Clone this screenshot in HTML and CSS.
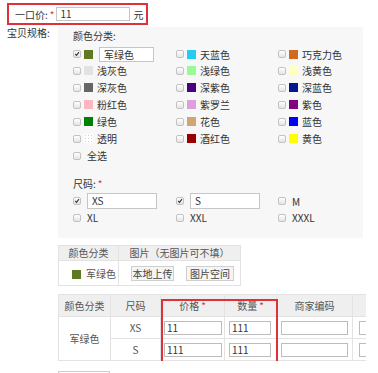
FILE: index.html
```html
<!DOCTYPE html>
<html>
<head>
<meta charset="utf-8">
<link rel="stylesheet" href="styles.css">
</head>
<body>
<div class="page">
  <div class="price">
    <span class="price-label">一口价:</span><span class="req">*</span>
    <span class="price-input">11</span>
    <span class="unit">元</span>
  </div>

  <div class="spec">
    <div class="spec-label">宝贝规格:</div>
    <div class="panel">
      <div class="sec-title">颜色分类:</div>
      <div class="colors">
        <div class="item"><span class="cb on"><svg viewBox="0 0 8 8"><path d="M1.6 3.9 L3.3 5.7 L6.6 1.6"/></svg></span><span class="sw" style="background:#5f7a22"></span><span class="name-input">军绿色</span></div>
        <div class="item"><span class="cb"></span><span class="sw" style="background:#22ccf2"></span><span class="lbl">天蓝色</span></div>
        <div class="item"><span class="cb"></span><span class="sw" style="background:#d2691e"></span><span class="lbl">巧克力色</span></div>

        <div class="item"><span class="cb"></span><span class="sw" style="background:#e2e2e2"></span><span class="lbl">浅灰色</span></div>
        <div class="item"><span class="cb"></span><span class="sw" style="background:#98fb98"></span><span class="lbl">浅绿色</span></div>
        <div class="item"><span class="cb"></span><span class="sw" style="background:#ffffc0"></span><span class="lbl">浅黄色</span></div>

        <div class="item"><span class="cb"></span><span class="sw" style="background:#666666"></span><span class="lbl">深灰色</span></div>
        <div class="item"><span class="cb"></span><span class="sw" style="background:#4b0082"></span><span class="lbl">深紫色</span></div>
        <div class="item"><span class="cb"></span><span class="sw" style="background:#021890"></span><span class="lbl">深蓝色</span></div>

        <div class="item"><span class="cb"></span><span class="sw" style="background:#ffb6c1"></span><span class="lbl">粉红色</span></div>
        <div class="item"><span class="cb"></span><span class="sw" style="background:#dda0dd"></span><span class="lbl">紫罗兰</span></div>
        <div class="item"><span class="cb"></span><span class="sw" style="background:#800080"></span><span class="lbl">紫色</span></div>

        <div class="item"><span class="cb"></span><span class="sw" style="background:#008000"></span><span class="lbl">绿色</span></div>
        <div class="item"><span class="cb"></span><span class="sw" style="background:#d2a574"></span><span class="lbl">花色</span></div>
        <div class="item"><span class="cb"></span><span class="sw" style="background:#0000ff"></span><span class="lbl">蓝色</span></div>

        <div class="item"><span class="cb"></span><span class="sw clear"></span><span class="lbl">透明</span></div>
        <div class="item"><span class="cb"></span><span class="sw" style="background:#990000"></span><span class="lbl">酒红色</span></div>
        <div class="item"><span class="cb"></span><span class="sw" style="background:#ffff00"></span><span class="lbl">黄色</span></div>

        <div class="item"><span class="cb wide"></span><span class="lbl">全选</span></div>
      </div>

      <div class="sec-title size-title">尺码:<span class="req">*</span></div>
      <div class="sizes">
        <div class="item"><span class="cb on wide"><svg viewBox="0 0 8 8"><path d="M1.6 3.9 L3.3 5.7 L6.6 1.6"/></svg></span><span class="size-input">XS</span></div>
        <div class="item"><span class="cb on wide"><svg viewBox="0 0 8 8"><path d="M1.6 3.9 L3.3 5.7 L6.6 1.6"/></svg></span><span class="size-input">S</span></div>
        <div class="item"><span class="cb wide"></span><span class="lbl">M</span></div>
        <div class="item"><span class="cb wide"></span><span class="lbl">XL</span></div>
        <div class="item"><span class="cb wide"></span><span class="lbl">XXL</span></div>
        <div class="item"><span class="cb wide"></span><span class="lbl">XXXL</span></div>
      </div>
    </div>
  </div>

  <table class="pic-table">
    <tr class="head"><td class="c1">颜色分类</td><td>图片（无图片可不填）</td></tr>
    <tr class="body-row">
      <td class="c1 color-cell"><span class="sw" style="background:#5f7a22"></span><span>军绿色</span></td>
      <td class="btn-cell"><span class="btn b1">本地上传</span><span class="btn b2">图片空间</span></td>
    </tr>
  </table>

  <div class="sku-wrap">
    <table class="sku-table">
      <colgroup><col style="width:52px"><col style="width:50px"><col style="width:64px"><col style="width:52px"><col style="width:76px"><col style="width:60px"></colgroup>
      <tr class="head"><td>颜色分类</td><td>尺码</td><td>价格<span class="req">*</span></td><td>数量<span class="req">*</span></td><td>商家编码</td><td></td></tr>
      <tr>
        <td rowspan="2">军绿色</td><td>XS</td>
        <td class="lc"><span class="ti w-price">11</span></td>
        <td class="lc"><span class="ti w-qty">111</span></td>
        <td class="lc"><span class="ti w-code"></span></td>
        <td class="lc"><span class="ti w-last"></span></td>
      </tr>
      <tr>
        <td>S</td>
        <td class="lc"><span class="ti w-price">111</span></td>
        <td class="lc"><span class="ti w-qty">111</span></td>
        <td class="lc"><span class="ti w-code"></span></td>
        <td class="lc"><span class="ti w-last"></span></td>
      </tr>
    </table>
    <div class="mark"></div>
  </div>

  <div class="stub"></div>
</div>
</body>
</html>
```
FILE: styles.css
```css
html, body {
  margin: 0;
  overflow: hidden;
}
body {
  font-family: "Noto Sans CJK SC", "Noto Sans", sans-serif;
  font-size: 10px;
  color: #333;
  background: #fff;
}
.page {
  padding: 3px 0 0 7px;
}
.req {
  color: #e0313b;
  margin-left: 2px;
}
.price {
  display: flex;
  align-items: center;
  width: 141px;
  height: 22px;
  box-sizing: border-box;
  border: 2px solid #e0313b;
}
.price-label {
  padding-left: 6px;
}
.price-input {
  margin-left: 2px;
  width: 74px;
  height: 14px;
  line-height: 12px;
  box-sizing: border-box;
  border: 1px solid #c6c6c6;
  padding-left: 3px;
  background: #fff;
}
.unit {
  margin-left: 3px;
}
.spec {
  display: flex;
  margin-top: 2px;
}
.spec-label {
  width: 51px;
  line-height: 12px;
}
.panel {
  width: 305px;
  height: 211px;
  box-sizing: border-box;
  background: #f7f7f7;
  padding: 2px 0 0 15px;
}
.sec-title {
  height: 14px;
  line-height: 14px;
  margin-bottom: 3px;
}
.colors {
  display: grid;
  grid-template-columns: 103px 102px 90px;
  grid-template-rows: 16px repeat(6, 17px);
}
.item {
  display: flex;
  align-items: center;
  white-space: nowrap;
}
.cb {
  flex: none;
  width: 8px;
  height: 8px;
  box-sizing: border-box;
  border: 1px solid #c2c2c2;
  border-radius: 2px;
  background: linear-gradient(#ffffff, #e4e4e4);
  margin-right: 3px;
  display: flex;
}
.cb.wide {
  margin-right: 6px;
}
.cb svg {
  width: 6px;
  height: 6px;
}
.cb svg path {
  fill: none;
  stroke: #333;
  stroke-width: 1.5;
}
.sw {
  flex: none;
  width: 9px;
  height: 9px;
  margin-right: 4px;
}
.sw.clear {
  background-color: #fff;
  background-image: radial-gradient(circle, #d0d0d0 0.8px, transparent 1px);
  background-size: 3px 3px;
}
.name-input {
  margin-left: 2px;
  width: 55px;
  height: 15px;
  line-height: 13px;
  box-sizing: border-box;
  border: 1px solid #c6c6c6;
  background: #fff;
  padding-left: 4px;
}
.size-title {
  margin-top: 13px;
  margin-bottom: 2px;
}
.sizes {
  display: grid;
  grid-template-columns: 103px 102px 90px;
  grid-template-rows: 16px 17px;
}
.size-input {
  width: 70px;
  height: 16px;
  line-height: 14px;
  box-sizing: border-box;
  border: 1px solid #c6c6c6;
  background: #fff;
  padding-left: 4px;
}
.pic-table {
  margin: 7px 0 0 51px;
  border-collapse: collapse;
  table-layout: fixed;
  width: 183px;
  color: #555;
}
.pic-table td {
  border: 1px solid #e3e3e3;
  padding: 0;
  text-align: center;
  white-space: nowrap;
}
.head td {
  background: #efefef;
}
.pic-table .head td {
  height: 14px;
  line-height: 12px;
}
.pic-table .c1 {
  width: 59px;
}
.pic-table .body-row td {
  height: 24px;
}
.pic-table .color-cell {
  text-align: left;
  padding-left: 13px;
  box-sizing: border-box;
}
.color-cell .sw {
  display: inline-block;
  vertical-align: -1px;
  margin-right: 5px;
}
.btn-cell {
  text-align: left;
}
.btn {
  display: inline-block;
  height: 15px;
  line-height: 13px;
  box-sizing: border-box;
  border: 1px solid #cfcfcf;
  background: #f5f5f5;
  text-align: center;
  vertical-align: middle;
  color: #444;
}
.b1 {
  width: 43px;
  margin-left: 6px;
}
.b2 {
  width: 48px;
  margin-left: 12px;
}
.sku-wrap {
  position: relative;
  margin: 8px 0 0 51px;
  width: 308px;
  overflow: hidden;
}
.sku-table {
  border-collapse: collapse;
  table-layout: fixed;
  width: 354px;
  color: #555;
}
.sku-table td {
  border: 1px solid #e3e3e3;
  padding: 0;
  height: 21px;
  text-align: center;
}
.sku-table td.lc {
  text-align: left;
}
.ti {
  display: block;
  height: 14px;
  line-height: 12px;
  box-sizing: border-box;
  border: 1px solid #bcbcbc;
  background: #fff;
  padding-left: 2px;
  color: #333;
}
.w-price {
  width: 58px;
  margin-left: 3px;
}
.w-qty {
  width: 42px;
  margin-left: 4px;
}
.w-code {
  width: 67px;
  margin-left: 4px;
}
.w-last {
  width: 50px;
  margin-left: 6px;
}
.mark {
  position: absolute;
  left: 103px;
  top: 5px;
  width: 117px;
  height: 65px;
  box-sizing: border-box;
  border: 2px solid #e0313b;
}
.stub {
  margin: 10px 0 0 51px;
  width: 52px;
  height: 6px;
  box-sizing: border-box;
  border: 1px solid #cccccc;
  border-bottom: none;
}
```
